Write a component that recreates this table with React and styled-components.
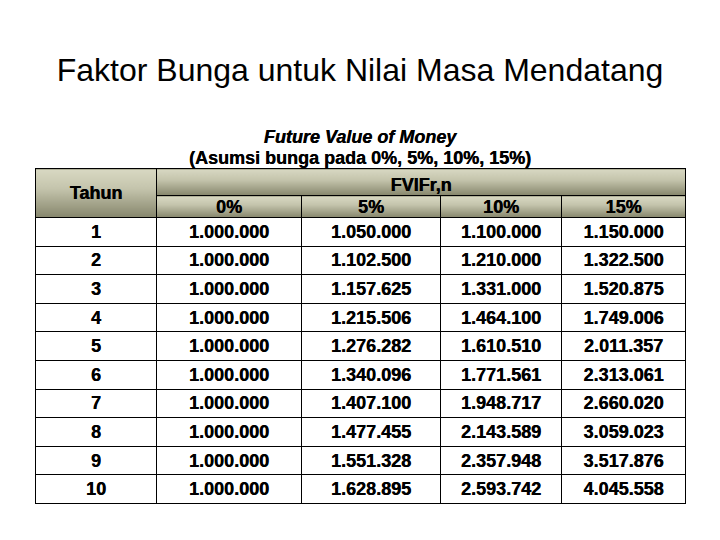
import React from 'react';
import styled, { createGlobalStyle } from 'styled-components';

const GlobalStyle = createGlobalStyle`
  html, body {
    margin: 0;
    padding: 0;
    background: #ffffff;
  }
  body {
    font-family: "Liberation Sans", Arial, sans-serif;
    color: #000000;
  }
`;

const Slide = styled.div`
  width: 720px;
  height: 540px;
  box-sizing: border-box;
  padding-top: 50px;
  display: flex;
  flex-direction: column;
  align-items: center;
`;

const Title = styled.h1`
  margin: 0;
  font-size: 32px;
  font-weight: normal;
  line-height: 40px;
  text-align: center;
`;

const Subtitle = styled.div`
  margin-top: 37px;
  font-size: 18px;
  font-weight: bold;
  line-height: 21px;
  text-align: center;
  text-shadow: 0.4px 0 0 #000000;
  em {
    font-style: italic;
  }
`;

const Table = styled.table`
  margin-top: -1px;
  margin-left: 1px;
  border-collapse: collapse;
  table-layout: fixed;
  width: 650px;
  font-size: 18px;
  font-weight: bold;
  text-align: center;
  text-shadow: 0.4px 0 0 #000000;
  td,
  th {
    border: 1px solid #000000;
    padding: 0;
  }
`;

const Head = styled.th`
  height: ${(props) => props.h}px;
  vertical-align: ${(props) => props.valign || 'middle'};
  line-height: 20px;
  background: linear-gradient(to bottom, #d8d8c2 0%, #c4c4ac 40%, #86866c 100%);
  font-weight: bold;
`;

const Cell = styled.td`
  height: 27.6px;
  line-height: 20px;
  vertical-align: middle;
`;

const widths = [121, 145, 139, 121, 124];
const rates = ['0%', '5%', '10%', '15%'];

const rows = [
  ['1.000.000', '1.050.000', '1.100.000', '1.150.000'],
  ['1.000.000', '1.102.500', '1.210.000', '1.322.500'],
  ['1.000.000', '1.157.625', '1.331.000', '1.520.875'],
  ['1.000.000', '1.215.506', '1.464.100', '1.749.006'],
  ['1.000.000', '1.276.282', '1.610.510', '2.011.357'],
  ['1.000.000', '1.340.096', '1.771.561', '2.313.061'],
  ['1.000.000', '1.407.100', '1.948.717', '2.660.020'],
  ['1.000.000', '1.477.455', '2.143.589', '3.059.023'],
  ['1.000.000', '1.551.328', '2.357.948', '3.517.876'],
  ['1.000.000', '1.628.895', '2.593.742', '4.045.558'],
];

const App = () => {
  return (
    <>
      <GlobalStyle />
      <Slide>
        <Title>Faktor Bunga untuk Nilai Masa Mendatang</Title>
        <Subtitle>
          <em>Future Value of Money</em>
          <br />
          (Asumsi bunga pada 0%, 5%, 10%, 15%)
        </Subtitle>
        <Table>
          <colgroup>
            {widths.map((w, i) => (
              <col key={i} style={{ width: w }} />
            ))}
          </colgroup>
          <thead>
            <tr>
              <Head rowSpan={2} h={26}>
                Tahun
              </Head>
              <Head colSpan={4} h={26} valign="bottom">
                FVIFr,n
              </Head>
            </tr>
            <tr>
              {rates.map((r) => (
                <Head key={r} h={21} valign="bottom">
                  {r}
                </Head>
              ))}
            </tr>
          </thead>
          <tbody>
            {rows.map((row, i) => (
              <tr key={i}>
                <Cell>{i + 1}</Cell>
                {row.map((v, j) => (
                  <Cell key={j}>{v}</Cell>
                ))}
              </tr>
            ))}
          </tbody>
        </Table>
      </Slide>
    </>
  );
};

export default App;
